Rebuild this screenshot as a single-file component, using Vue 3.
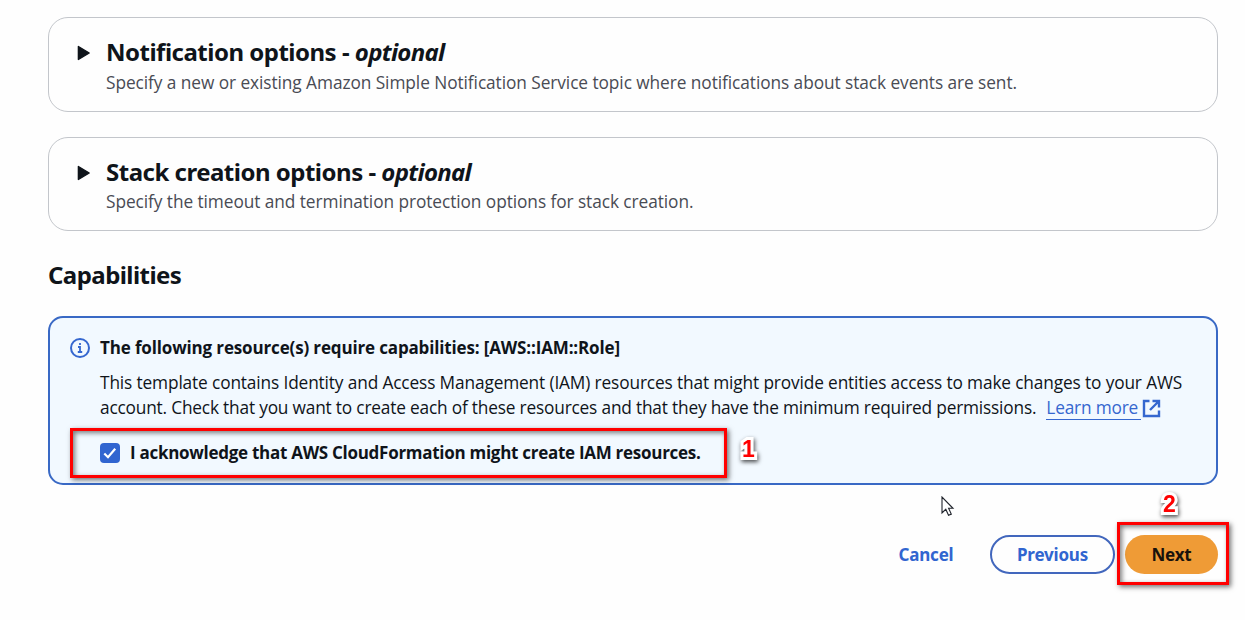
<script setup>
const sections = [
  { id: 'notify', title: 'Notification options - ', text: 'Specify a new or existing Amazon Simple Notification Service topic where notifications about stack events are sent.' },
  { id: 'stack', title: 'Stack creation options - ', text: 'Specify the timeout and termination protection options for stack creation.' },
]
</script>

<template>
  <main class="page">
    <section v-for="s in sections" :key="s.id" class="card" :class="s.id">
      <svg class="caret" width="14" height="16" viewBox="0 0 14 16"><path d="M1.4 1.5 12.2 8 1.4 14.5Z" fill="#0f141a" stroke="#0f141a" stroke-width="1.4" stroke-linejoin="round" /></svg>
      <div>
        <h2><span class="name">{{ s.title }}</span><em>optional</em></h2>
        <p><span>{{ s.text }}</span></p>
      </div>
    </section>

    <h2 class="heading"><span>Capabilities</span></h2>

    <section class="alert">
      <svg class="info" width="20" height="20" viewBox="0 0 20 20" fill="none" stroke="#3567cf" stroke-width="2">
        <circle cx="10" cy="10" r="9" />
        <path d="M10 5v2M8 9h2v5M7.8 14h4.4" stroke-width="1.8" />
      </svg>
      <div class="body">
        <h3><span>The following resource(s) require capabilities: [AWS::IAM::Role]</span></h3>
        <p class="l1"><span>This template contains Identity and Access Management (IAM) resources that might provide entities access to make changes to your AWS</span></p>
        <p class="l2">
          <span>account. Check that you want to create each of these resources and that they have the minimum required permissions.</span>
          <a><b>Learn more</b></a>
          <svg class="ext" width="19" height="19" viewBox="0 0 19 19" fill="none" stroke="#3567cf" stroke-width="2.4"><path d="M7.5 2H2v15h15v-5.5M10.5 2H17v6.5M17 2 8 11" /></svg>
        </p>
        <label class="ack">
          <i class="box"><svg width="20" height="20" viewBox="0 0 20 20"><path d="m4.3 10.5 3.7 3.7 7.2-8.4" fill="none" stroke="#fff" stroke-width="2.2" /></svg></i>
          <span>I acknowledge that AWS CloudFormation might create IAM resources.</span>
        </label>
      </div>
    </section>

    <footer>
      <button class="cancel"><span>Cancel</span></button>
      <button class="previous"><span>Previous</span></button>
      <button class="next"><span>Next</span></button>
    </footer>

    <div class="mark m1"></div>
    <div class="mark m2"></div>
    <div class="num n1">1</div>
    <div class="num n2">2</div>
    <svg class="cursor" width="14" height="21" viewBox="0 0 14 21"><path d="M1 1v16l3.8-3.7 2.7 6 2.8-1.2-2.7-5.8H12Z" fill="#fff" stroke="#20242c" stroke-width="1.1" /></svg>
  </main>
</template>

<style>
body { background: #fefefe; overflow: hidden; }
</style>

<style scoped>
* { box-sizing: border-box; }
.page { position: relative; width: 1245px; height: 620px; padding: 17px 27px 0 48px; overflow: hidden; font-family: "Open Sans", "Noto Sans", sans-serif; font-size: 17.3px; line-height: 25px; color: #0f141a; }
h2, h3, p { margin: 0; white-space: nowrap; }
h2 { font-family: "Noto Sans", sans-serif; font-size: 24px; line-height: 30px; font-weight: 700; }
.card { display: flex; height: 95px; padding: 19px 28px 0; border: 1px solid #c3c6cb; border-radius: 20px; background: #fefefe; }
.card + .card { height: 94px; margin-top: 25px; }
.caret { margin: 8px 15px 0 0; flex: none; }
.card p { color: #494b54; margin-top: 3px; letter-spacing: -.07px; }
.card.stack p { margin-top: 2px; }
.heading { margin-top: 29px; letter-spacing: -.55px; }
.name { white-space: pre; }
.name { letter-spacing: -.5px; }
em { letter-spacing: -.7px; }
.alert { display: flex; height: 169px; margin-top: 26px; padding: 18px 20px; border: 2px solid #3969c5; border-radius: 15px; background: #f2f9ff; }
.info { flex: none; margin: 2px 10px 0 0; }
h3 { font-size: 17px; line-height: 24px; font-weight: 700; letter-spacing: -.15px; }
.l1 { margin-top: 10px; letter-spacing: -.14px; }
.l2 { display: flex; letter-spacing: -.19px; }
.l2 a { margin-left: 10px; height: 25px; width: 95px; border-bottom: 1px solid #3567cf; color: #3567cf; }
.l2 b { font-weight: 400; }
.ext { margin: 4px 0 0 1px; }
.ack { display: flex; align-items: center; margin-top: 20px; font-size: 17px; font-weight: 700; white-space: nowrap; letter-spacing: -.28px; }
.box { width: 20px; height: 20px; margin-right: 10px; border-radius: 4px; background: #3165d0; flex: none; }
.box svg { display: block; }
footer { display: flex; justify-content: flex-end; margin-top: 50px; }
button { height: 39px; padding: 0; border: 0; border-radius: 20px; background: transparent; font: 700 17px/37px "Noto Sans", sans-serif; color: #3165d0; white-space: nowrap; letter-spacing: -.2px; }
button span { display: block; margin-top: -1px; }
.cancel { width: 56px; margin-right: 36px; }
.previous { width: 125px; margin-right: 10px; border: 2px solid #4267bd; line-height: 33px; }
.next { width: 93px; background: #ef9b36; color: #19120c; }
.mark { position: absolute; border: 3px solid #f00; box-shadow: 2px 2px 5px rgba(0,0,0,.55), inset 2px 2px 5px rgba(0,0,0,.5); }
.m1 { left: 70px; top: 428px; width: 657px; height: 50px; }
.m2 { left: 1117px; top: 522px; width: 112px; height: 63px; }
.num { position: absolute; font: 700 23px/26px "Liberation Sans", sans-serif; color: #f00; -webkit-text-stroke: 6px #fff; paint-order: stroke fill; filter: drop-shadow(1px 2px 2px rgba(0,0,0,.7)); }
.n1 { left: 742px; top: 436px; }
.n2 { left: 1163px; top: 491px; }
.cursor { position: absolute; left: 941px; top: 496px; }
</style>
